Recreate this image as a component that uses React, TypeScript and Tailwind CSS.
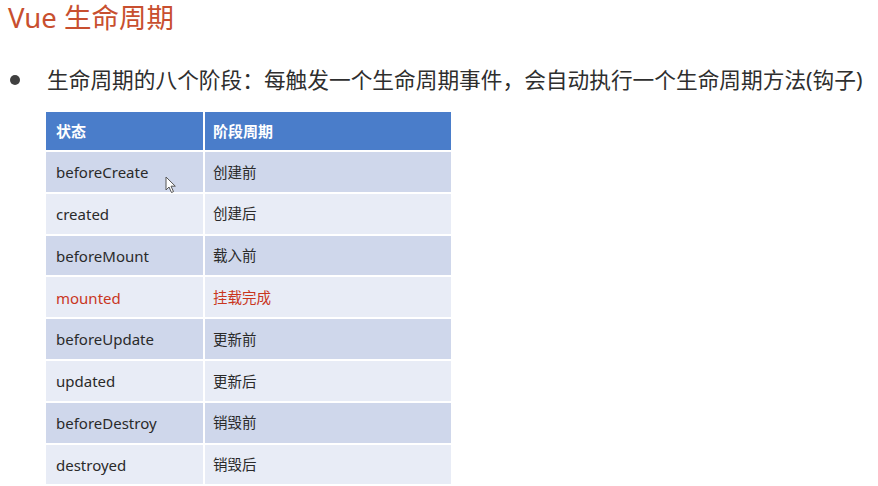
import React from "react";

const rows: { a: string; b: string; red?: boolean }[] = [
  { a: "beforeCreate", b: "创建前" },
  { a: "created", b: "创建后" },
  { a: "beforeMount", b: "载入前" },
  { a: "mounted", b: "挂载完成", red: true },
  { a: "beforeUpdate", b: "更新前" },
  { a: "updated", b: "更新后" },
  { a: "beforeDestroy", b: "销毁前" },
  { a: "destroyed", b: "销毁后" },
];

export default function App() {
  return (
    <div
      className="relative w-[878px] h-[486px] bg-white overflow-hidden"
      style={{ fontFamily: '"Noto Sans", "Noto Sans CJK SC", sans-serif' }}
    >
      <div className="pl-[8px] h-[36px] leading-[36px] text-[27.5px] text-[#c84f2f]">
        Vue 生命周期
      </div>
      <div className="mt-[26px] h-[36px] flex items-center">
        <div className="ml-[10px] w-[10px] h-[10px] rounded-full bg-[#404040]" />
        <div className="ml-[27px] text-[21.7px] leading-[36px] text-[#2e2e2e] whitespace-nowrap">
          生命周期的八个阶段：每触发一个生命周期事件，会自动执行一个生命周期方法(钩子)
        </div>
      </div>
      <div className="mt-[14px] ml-[46px] w-[405px] grid grid-cols-[157px_246px] gap-[2px] bg-white">
        <div className="h-[38px] bg-[#4a7dca] text-white font-bold text-[15px] flex items-center pl-[10px]">
          状态
        </div>
        <div className="h-[38px] bg-[#4a7dca] text-white font-bold text-[15px] flex items-center pl-[8px]">
          阶段周期
        </div>
        {rows.map((r, i) => {
          const bg = i % 2 === 0 ? "bg-[#cfd7eb]" : "bg-[#e8ecf6]";
          const color = r.red ? "text-[#c9361e]" : "text-[#2a2a2a]";
          return (
            <React.Fragment key={r.a}>
              <div className={`h-[39.8px] ${bg} ${color} text-[15px] flex items-center pl-[10px] pt-[1px]`}>
                {r.a}
              </div>
              <div className={`h-[39.8px] ${bg} ${color} text-[14.5px] flex items-center pl-[8px] pt-[1px]`}>
                {r.b}
              </div>
            </React.Fragment>
          );
        })}
      </div>
      <svg
        className="absolute left-[165px] top-[176px]"
        width="12"
        height="18"
        viewBox="0 0 12 18"
      >
        <path
          d="M1 1 L1 14 L4 11 L6.5 16.5 L8.5 15.6 L6 10.2 L10.3 10.2 Z"
          fill="white"
          stroke="#555"
          strokeWidth="1"
          strokeLinejoin="round"
        />
      </svg>
    </div>
  );
}
